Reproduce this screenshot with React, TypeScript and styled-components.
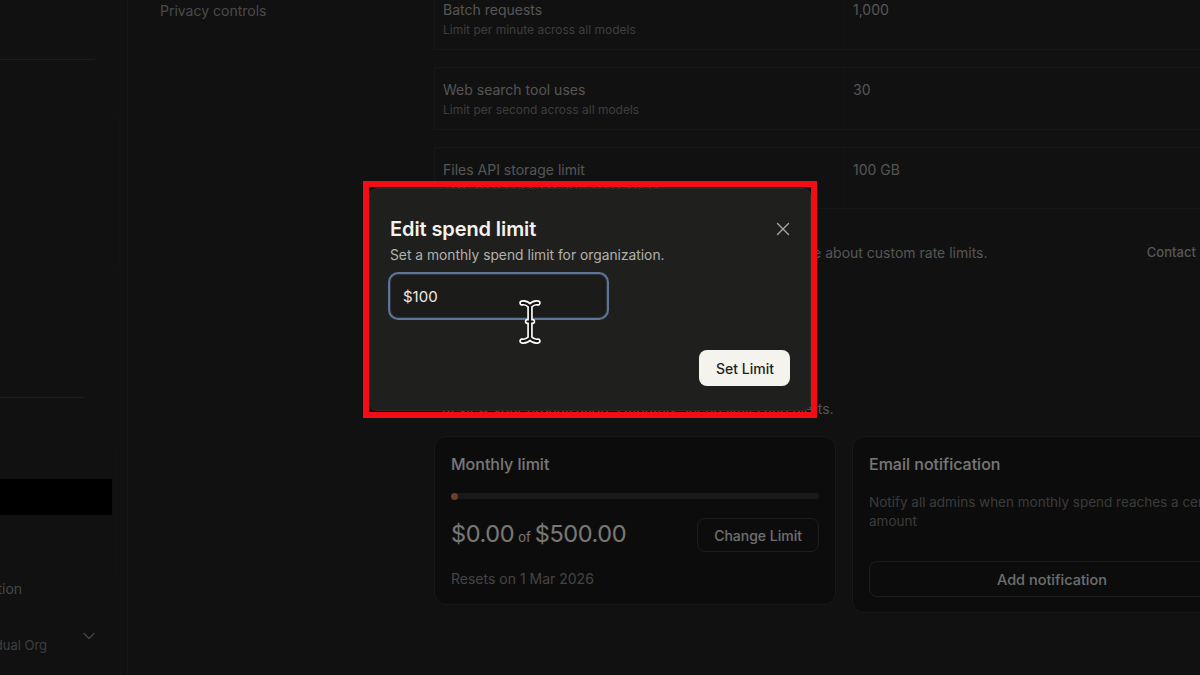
import React from 'react';
import styled, { createGlobalStyle } from 'styled-components';

const GlobalStyle = createGlobalStyle`
  html, body {
    margin: 0;
    padding: 0;
    background: #222222;
    overflow: hidden;
  }

  body {
    font-family: Inter, "Noto Sans", "Liberation Sans", sans-serif;
    -webkit-font-smoothing: antialiased;
  }
`;

const Page = styled.div`
  display: flex;
  width: 1200px;
  height: 675px;
  overflow: hidden;
  background: #222222;
  color: #aaaaaa;
`;

/* ---------- left app sidebar (scrolled / cut at the edge) ---------- */

const Sidebar = styled.aside`
  flex: 0 0 127px;
  display: flex;
  flex-direction: column;
  border-right: 1px solid #2c2c2c;
  overflow: hidden;
`;

const Divider = styled.div<{ $width: number; $top: number }>`
  width: ${(p) => p.$width}px;
  height: 1px;
  margin-top: ${(p) => p.$top}px;
  background: #393939;
  flex-shrink: 0;
`;

const SideBox = styled.div<{ $height: number; $top: number; $width: number }>`
  width: ${(p) => p.$width}px;
  height: ${(p) => p.$height}px;
  margin-top: ${(p) => p.$top}px;
  border: 1px solid #262626;
  border-left: none;
  box-sizing: border-box;
  flex-shrink: 0;
`;

const SidePanel = styled.div`
  width: 117px;
  height: 133px;
  margin-top: 49px;
  padding-top: 32px;
  box-sizing: border-box;
  border-right: 1px solid #262626;
  flex-shrink: 0;
`;

const RedactedBar = styled.div`
  width: 112px;
  height: 36px;
  background: #000000;
`;

const SideLabel = styled.div<{ $shift: number; $top: number }>`
  margin-top: ${(p) => p.$top}px;
  margin-left: ${(p) => p.$shift}px;
  font-size: 14px;
  line-height: 20px;
  color: #8c8c8c;
  white-space: nowrap;
`;

const OrgSwitch = styled.div`
  display: flex;
  align-items: flex-start;
  justify-content: space-between;
  width: 96px;
  margin-top: 33px;
`;

const OrgName = styled.div`
  margin-left: -38px;
  margin-top: 4px;
  font-size: 13px;
  line-height: 18px;
  color: #7c7c7c;
  white-space: nowrap;
`;

const Chevron = styled.svg`
  margin-top: -3px;
  flex-shrink: 0;
`;

/* ---------- settings nav ---------- */

const SettingsNav = styled.nav`
  flex: 0 0 306px;
  padding-left: 32px;
  box-sizing: border-box;
`;

const NavItem = styled.div`
  font-size: 14px;
  line-height: 20px;
  margin-top: 1px;
  color: #949494;
`;

/* ---------- main content ---------- */

const Main = styled.main`
  flex: 0 0 818px;
  display: flex;
  flex-direction: column;
  margin-top: -13px;
`;

const LimitRows = styled.div`
  display: flex;
  flex-direction: column;
  gap: 17px;
`;

const LimitRow = styled.div<{ $height: number }>`
  display: grid;
  grid-template-columns: 409px 1fr;
  height: ${(p) => p.$height}px;
  border: 1px solid #2e2e2e;
  box-sizing: border-box;
`;

const LabelCell = styled.div`
  padding: 13px 8px 0;
`;

const ValueCell = styled.div`
  padding: 13px 8px 0;
  border-left: 1px solid #2a2a2a;
  font-size: 14px;
  line-height: 18px;
  color: #aaaaaa;
`;

const RowTitle = styled.div`
  font-size: 14px;
  line-height: 18px;
  color: #aaaaaa;
`;

const RowHint = styled.div`
  margin-top: 3px;
  font-size: 12px;
  line-height: 16px;
  color: #7a7a7a;
`;

const NoteRow = styled.div`
  display: flex;
  align-items: center;
  justify-content: space-between;
  height: 36px;
  margin-top: 25px;
  padding-left: 12px;
`;

const NoteText = styled.div`
  font-size: 14px;
  color: #aaaaaa;
`;

const GhostButton = styled.button<{ $size?: number }>`
  height: 34px;
  padding: 0 16px;
  border: 1px solid #3a3a3a;
  border-radius: 8px;
  background: transparent;
  color: #dddddd;
  font-family: inherit;
  font-size: ${(p) => p.$size ?? 14}px;
  font-weight: 500;
`;

const ContactButton = styled(GhostButton)`
  border-color: transparent;
  font-size: 13px;
  color: #acacac;
  padding: 0 18px 0 16px;
`;

const SectionTitle = styled.h2`
  margin: 58px 0 0 8px;
  font-size: 18px;
  line-height: 24px;
  font-weight: 600;
  color: #eeeeee;
`;

const SectionText = styled.p`
  margin: 48px 0 0 8px;
  font-size: 14px;
  line-height: 18px;
  color: #aaaaaa;
`;

const CardGrid = styled.div`
  display: grid;
  grid-template-columns: 402px 400px;
  gap: 16px;
  align-items: start;
  margin-top: 18px;
`;

const Card = styled.section`
  display: flex;
  flex-direction: column;
  padding: 17px 16px 15px;
  border: 1px solid #313131;
  border-radius: 12px;
  background: #181818;
`;

const CardTitle = styled.h3`
  margin: 0;
  font-size: 16px;
  line-height: 20px;
  font-weight: 500;
  color: #eeeeee;
`;

const Track = styled.div`
  height: 6px;
  margin-top: 19px;
  border-radius: 3px;
  background: #333333;
`;

const TrackDot = styled.div`
  width: 7px;
  height: 7px;
  margin-top: -0.5px;
  border-radius: 50%;
  background: #e07a4f;
`;

const AmountRow = styled.div`
  display: flex;
  align-items: center;
  justify-content: space-between;
  margin-top: 19px;
`;

const Amount = styled.div`
  font-size: 23.5px;
  line-height: 30px;
  color: #eeeeee;
  letter-spacing: -0.4px;

  small {
    font-size: 13px;
    margin: 0 4px;
    letter-spacing: 0;
  }
`;

const Resets = styled.div`
  margin-top: 17px;
  font-size: 14px;
  line-height: 20px;
  color: #888888;
`;

const CardText = styled.p`
  margin: 19px 0 0;
  font-size: 13.5px;
  line-height: 19px;
  color: #767676;
`;

const WideButton = styled(GhostButton)`
  height: 36px;
  margin-top: 30px;
  width: 100%;
  font-size: 14.5px;
`;

/* ---------- modal ---------- */

const Overlay = styled.div`
  position: fixed;
  inset: 0;
  background: rgba(0, 0, 0, 0.5);
  padding: 188px 0 0 369px;
  box-sizing: border-box;
`;

const Highlight = styled.div`
  position: absolute;
  left: 363px;
  top: 181px;
  width: 454px;
  height: 237px;
  border: 6px solid #f20c16;
  box-sizing: border-box;
  pointer-events: none;
`;

const Dialog = styled.div`
  width: 442px;
  height: 223px;
  padding: 27px 21px 0 20px;
  box-sizing: border-box;
  border: 1px solid #2b2b2a;
  border-radius: 8px;
  background: #1f1f1e;
  display: flex;
  flex-direction: column;
`;

const DialogHead = styled.div`
  display: flex;
  align-items: center;
  justify-content: space-between;
`;

const DialogTitle = styled.h2`
  margin: 0;
  font-size: 20px;
  line-height: 26px;
  font-weight: 600;
  color: #f3f2ee;
  letter-spacing: -0.1px;
`;

const CloseButton = styled.button`
  display: flex;
  align-items: center;
  justify-content: center;
  width: 20px;
  height: 20px;
  margin-right: -4px;
  padding: 0;
  border: none;
  background: transparent;
`;

const DialogText = styled.p`
  margin: 3px 0 0;
  font-size: 13.8px;
  line-height: 20px;
  color: #b3b2ad;
`;

const InputWrap = styled.div`
  position: relative;
  width: 217px;
  margin-top: 9px;
`;

const AmountInput = styled.input`
  width: 100%;
  height: 44px;
  padding: 0 12px;
  box-sizing: border-box;
  border: 1px solid #2e3540;
  border-radius: 8px;
  background: #1b1b1a;
  color: #ecebe7;
  font-family: inherit;
  font-size: 15px;
  outline: none;
  box-shadow: 0 0 0 2px #5d7594;
`;

const TextCursor = styled.svg`
  position: absolute;
  left: 128px;
  top: 25px;
  pointer-events: none;
`;

const DialogFoot = styled.div`
  display: flex;
  justify-content: flex-end;
  margin-top: 32px;
`;

const PrimaryButton = styled.button`
  height: 36px;
  padding: 0 16px 0 17px;
  margin-right: -1px;
  border: none;
  border-radius: 8px;
  background: #f4f3ee;
  color: #1e1e1d;
  font-family: inherit;
  font-size: 14px;
  font-weight: 500;
`;

const limits = [
  { title: 'Batch requests', hint: 'Limit per minute across all models', value: '1,000', height: 63 },
  { title: 'Web search tool uses', hint: 'Limit per second across all models', value: '30', height: 63 },
  { title: 'Files API storage limit', hint: 'Total storage across your organization', value: '100 GB', height: 62 },
];

const cursorPath = 'M4 4 Q8 3 12 7 Q16 3 20 4 M12 7 V39 M4 42 Q8 43 12 39 Q16 43 20 42 M9.5 22.5 H14.5';

export default function App() {
  return (
    <>
      <GlobalStyle />
      <Page>
        <Sidebar>
          <Divider $width={95} $top={59} />
          <SideBox $width={120} $height={154} $top={55} />
          <Divider $width={85} $top={128} />
          <SidePanel>
            <RedactedBar />
          </SidePanel>
          <SideLabel $shift={-62} $top={-1}>Organization</SideLabel>
          <OrgSwitch>
            <OrgName>Individual Org</OrgName>
            <Chevron width="14" height="14" viewBox="0 0 14 14" fill="none">
              <path d="M2 4.5 7 9.5 12 4.5" stroke="#8a8a8a" strokeWidth="1.3" strokeLinecap="round" strokeLinejoin="round" />
            </Chevron>
          </OrgSwitch>
        </Sidebar>

        <SettingsNav>
          <NavItem>Privacy controls</NavItem>
        </SettingsNav>

        <Main>
          <LimitRows>
            {limits.map((l) => (
              <LimitRow key={l.title} $height={l.height}>
                <LabelCell>
                  <RowTitle>{l.title}</RowTitle>
                  <RowHint>{l.hint}</RowHint>
                </LabelCell>
                <ValueCell>{l.value}</ValueCell>
              </LimitRow>
            ))}
          </LimitRows>

          <NoteRow>
            <NoteText>Need higher limits? Contact our sales team to learn more about custom rate limits.</NoteText>
            <ContactButton>Contact Sales</ContactButton>
          </NoteRow>

          <SectionTitle>Spend limits</SectionTitle>
          <SectionText>Review your organization's monthly spend limits and alerts.</SectionText>

          <CardGrid>
            <Card>
              <CardTitle>Monthly limit</CardTitle>
              <Track>
                <TrackDot />
              </Track>
              <AmountRow>
                <Amount>
                  $0.00<small>of</small>$500.00
                </Amount>
                <GhostButton>Change Limit</GhostButton>
              </AmountRow>
              <Resets>Resets on 1 Mar 2026</Resets>
            </Card>
            <Card>
              <CardTitle>Email notification</CardTitle>
              <CardText>Notify all admins when monthly spend reaches a certain amount</CardText>
              <WideButton>Add notification</WideButton>
            </Card>
          </CardGrid>
        </Main>
      </Page>

      <Overlay>
        <Dialog role="dialog">
          <DialogHead>
            <DialogTitle>Edit spend limit</DialogTitle>
            <CloseButton aria-label="Close">
              <svg width="14" height="14" viewBox="0 0 14 14" fill="none">
                <path d="M1.5 1.5 12.5 12.5M12.5 1.5 1.5 12.5" stroke="#a6a5a0" strokeWidth="1.4" strokeLinecap="round" />
              </svg>
            </CloseButton>
          </DialogHead>
          <DialogText>Set a monthly spend limit for organization.</DialogText>
          <InputWrap>
            <AmountInput defaultValue="$100" />
            <TextCursor width="24" height="46" viewBox="0 0 24 46" fill="none">
              <path d={cursorPath} stroke="#ffffff" strokeWidth="5.5" strokeLinecap="round" strokeLinejoin="round" />
              <path d={cursorPath} stroke="#111111" strokeWidth="2.2" strokeLinecap="round" strokeLinejoin="round" />
            </TextCursor>
          </InputWrap>
          <DialogFoot>
            <PrimaryButton>Set Limit</PrimaryButton>
          </DialogFoot>
        </Dialog>
      </Overlay>
      <Highlight />
    </>
  );
}
